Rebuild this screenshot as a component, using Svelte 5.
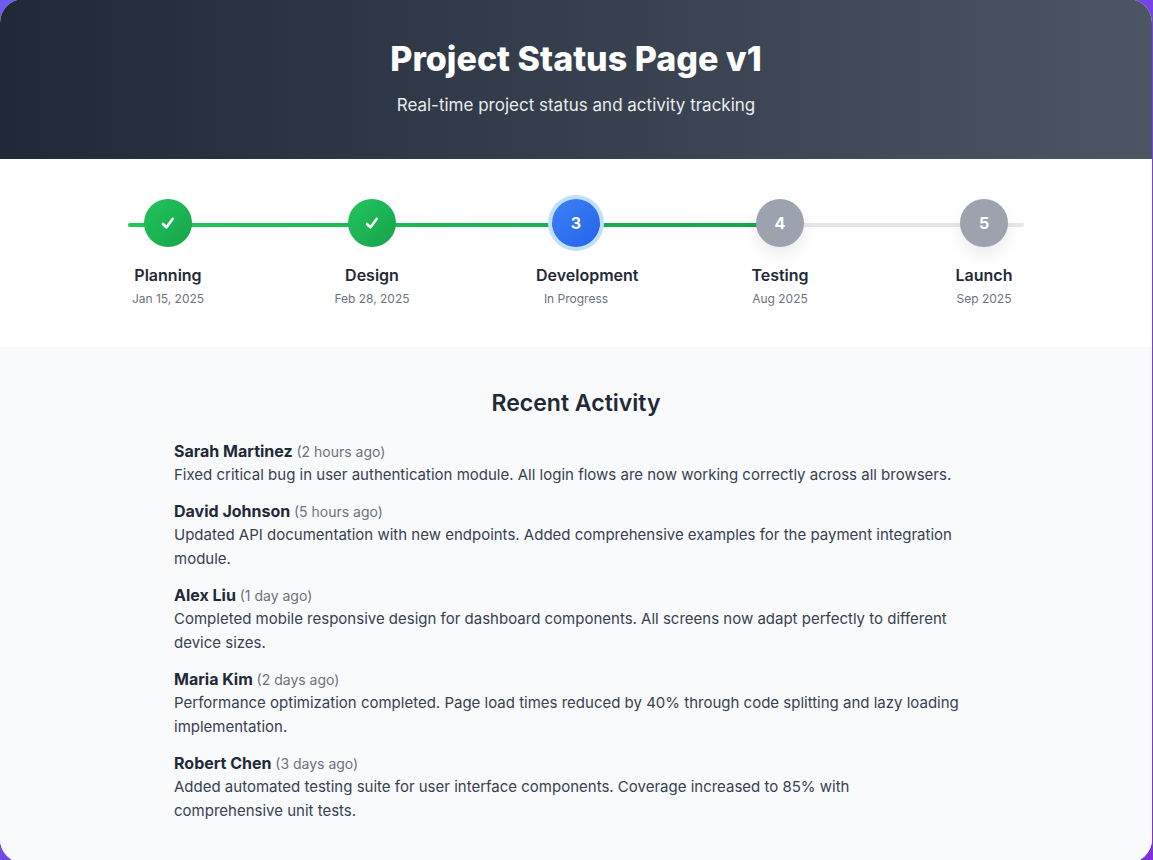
<script>
  const steps = [
    { name: 'Planning', date: 'Jan 15, 2025', state: 'done' },
    { name: 'Design', date: 'Feb 28, 2025', state: 'done' },
    { name: 'Development', date: 'In Progress', state: 'current' },
    { name: 'Testing', date: 'Aug 2025', state: 'pending' },
    { name: 'Launch', date: 'Sep 2025', state: 'pending' }
  ];
  const progress = 75;
  const activity = [
    { who: 'Sarah Martinez', when: '2 hours ago', text: 'Fixed critical bug in user authentication module. All login flows are now working correctly across all browsers.' },
    { who: 'David Johnson', when: '5 hours ago', text: 'Updated API documentation with new endpoints. Added comprehensive examples for the payment integration module.' },
    { who: 'Alex Liu', when: '1 day ago', text: 'Completed mobile responsive design for dashboard components. All screens now adapt perfectly to different device sizes.' },
    { who: 'Maria Kim', when: '2 days ago', text: 'Performance optimization completed. Page load times reduced by 40% through code splitting and lazy loading implementation.' },
    { who: 'Robert Chen', when: '3 days ago', text: 'Added automated testing suite for user interface components. Coverage increased to 85% with comprehensive\u00a0unit tests.' }
  ];
</script>

<div class="card">
  <header>
    <h1>Project Status Page v1</h1>
    <p>Real-time project status and activity tracking</p>
  </header>

  <section class="timeline">
    <div class="track"><div class="fill" style="width: {progress}%"></div></div>
    <ol>
      {#each steps as step, i}
        <li>
          <div class="marker {step.state}">
            {#if step.state === 'done'}
              <svg viewBox="0 0 16 16" width="16" height="16" aria-hidden="true">
                <path d="M3 9 L6.3 12.4 L12.6 3.9" fill="none" stroke="currentColor" stroke-width="2.6" stroke-linecap="round" stroke-linejoin="round" />
              </svg>
            {:else}{i + 1}{/if}
          </div>
          <h2>{step.name}</h2>
          <p>{step.date}</p>
        </li>
      {/each}
    </ol>
  </section>

  <section class="activity">
    <h2>Recent Activity</h2>
    <ul>
      {#each activity as item}
        <li>
          <h3>{item.who} <span>({item.when})</span></h3>
          <p>{item.text}</p>
        </li>
      {/each}
    </ul>
  </section>
</div>

<style>
  :global(body) {
    margin: 0;
    background: linear-gradient(135deg, #6c5cf3, #8030d8);
    font-family: Inter, "Liberation Sans", sans-serif;
    font-size: 16px;
    line-height: 24px;
    color: #374151;
  }
  h1, h2, h3, p, ol, ul { margin: 0; padding: 0; list-style: none; }
  .card { border-radius: 24px; overflow: hidden; background: #fff; margin: -1px 1px 0 0; }
  header {
    padding: 40px;
    text-align: center;
    color: #fff;
    background: linear-gradient(90deg, #1f2937, #4b5563);
  }
  h1 { font-size: 34px; line-height: 40px; font-weight: 800; margin-bottom: 12px; }
  header p { font-size: 17px; line-height: 28px; opacity: 0.9; }
  .timeline { position: relative; padding: 40px 128px; }
  .track {
    position: absolute;
    top: 64px;
    left: 128px;
    right: 128px;
    height: 4px;
    border-radius: 2px;
    background: #e5e7eb;
  }
  .fill { height: 100%; border-radius: 2px; background: linear-gradient(90deg, #22c55e, #16a34a); }
  ol { position: relative; display: flex; justify-content: space-between; }
  ol li { width: 80px; text-align: center; white-space: nowrap; }
  .marker {
    width: 48px;
    height: 48px;
    border-radius: 50%;
    display: flex;
    align-items: center;
    justify-content: center;
    margin: 0 auto 16px;
    color: #fff;
    font-weight: 700;
  }
  .done { background: linear-gradient(135deg, #22c55e, #16a34a); }
  .current { background: linear-gradient(135deg, #3b82f6, #2563eb); box-shadow: 0 0 0 4px #c3dff7; }
  .pending { background: #9ca3af; box-shadow: 0 8px 16px rgba(0, 0, 0, 0.08); }
  ol h2 { font-size: 16px; line-height: 24px; font-weight: 600; color: #1f2937; }
  ol p { font-size: 12px; line-height: 16px; color: #6b7280; margin-top: 4px; }
  .activity { background: #f9fafb; padding: 40px; }
  .activity h2 { font-size: 23px; line-height: 32px; font-weight: 600; color: #1f2937; text-align: center; margin-bottom: 20px; }
  ul { max-width: 804px; margin: 0 auto; display: grid; gap: 12px; }
  h3 { font-size: 16px; line-height: 24px; font-weight: 700; color: #1f2937; }
  h3 span { font-size: 14px; line-height: 20px; font-weight: 400; color: #6b7280; }
  ul p { font-size: 15px; }
</style>
